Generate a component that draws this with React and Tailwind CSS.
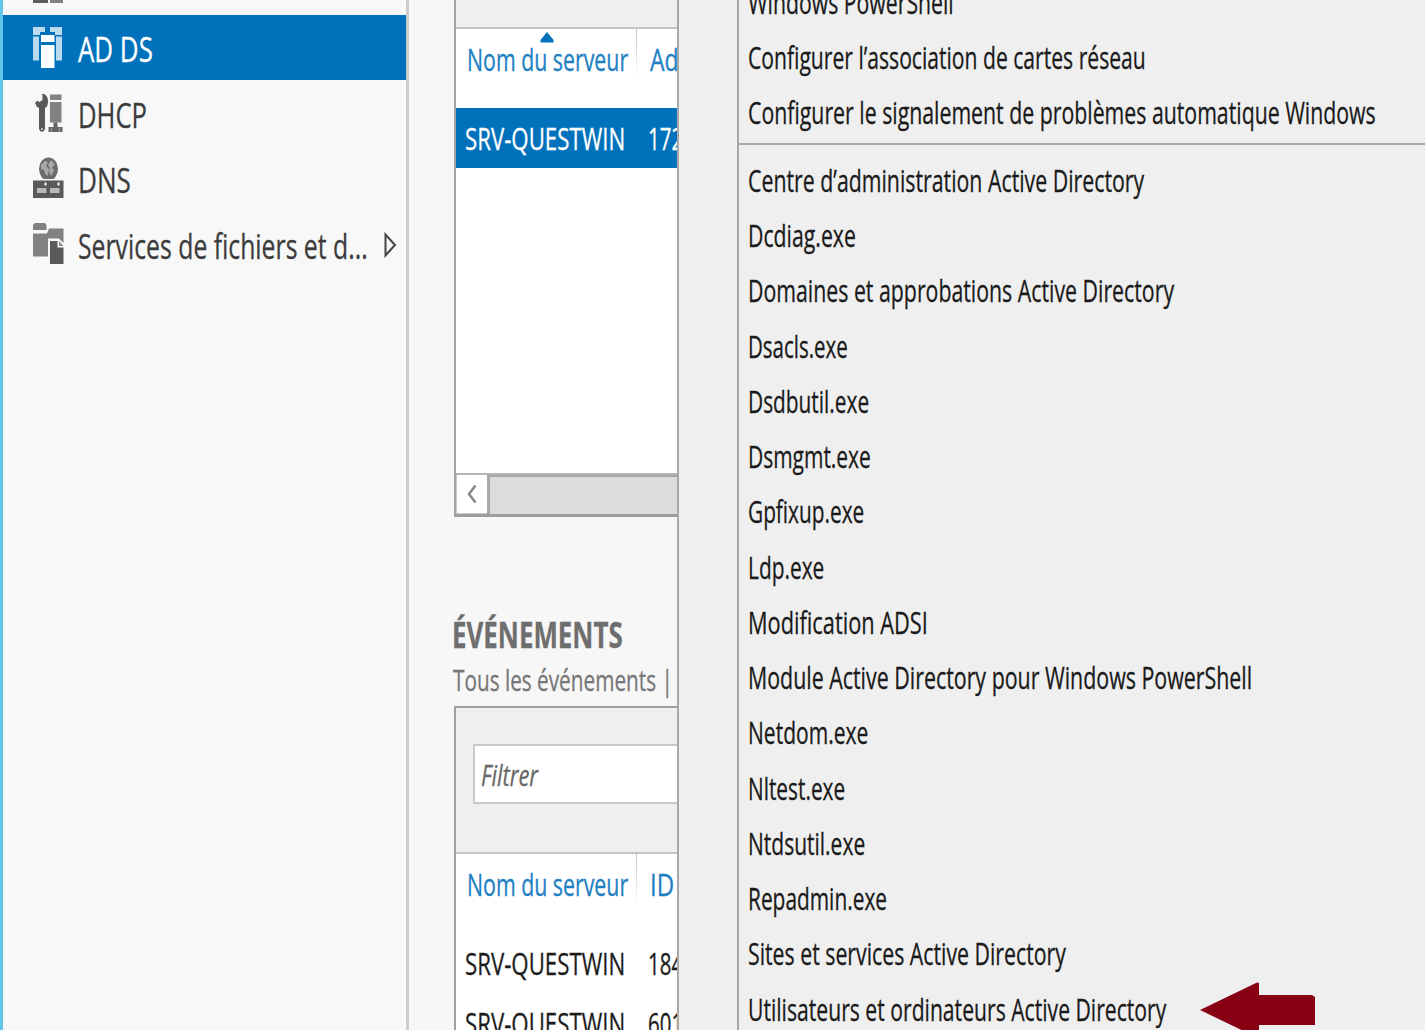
import { useLayoutEffect, useRef, useState } from "react";

// Condensed label: squeezes its text horizontally so that it spans `w` pixels.
function Label({ w, children, className = "" }) {
  const ref = useRef(null);
  const [scale, setScale] = useState(0.8);
  useLayoutEffect(() => {
    if (ref.current) setScale(w / ref.current.offsetWidth);
  }, [w, children]);
  return (
    <span className="block shrink-0" style={{ width: w }}>
      <span
        ref={ref}
        className={`inline-block origin-left whitespace-nowrap align-top [-webkit-text-stroke:0.3px_currentColor] ${className}`}
        style={{ transform: `scaleX(${scale})` }}
      >
        {children}
      </span>
    </span>
  );
}

function DomainIcon() {
  return (
    <svg className="mt-px" width="30" height="42" viewBox="0 0 30 42">
      <g fill="#bcdaee">
        <path d="M0 0h12v5H7v3H0z" />
        <path d="M17 0h12v8h-7V5h-5z" />
        <path d="M0 9.500h6V33.500H0zM23 9.500h6V33.500h-6z" />
      </g>
      <path d="M8 8h13.500v7H8zM8 18h13.500v23H8z" fill="#fff" />
    </svg>
  );
}

function DhcpIcon() {
  return (
    <svg className="mt-[2px]" width="30" height="40" viewBox="0 0 30 40">
      <path
        d="M7.500 0l2 .5V6L6.500 8 3.500 6.500v1L2 9l2 4 2 1v20c0 5 6 5 6 0V14c2-1 3-3 3-7 0-4-2-6-4-7z"
        fill="#595959"
      />
      <circle cx="9" cy="35" r="1" fill="#ddd" />
      <path d="M17 .5h11.500v5.500H17zM17 8h11.500v20.500H17z" fill="#828282" />
      <path d="M20.500 28.500h4V33h5v5H15.500v-5h5z" fill="#666" />
      <path d="M18.500 34v4M26.500 34v4" stroke="#a0a0a0" />
    </svg>
  );
}

function DnsIcon() {
  return (
    <svg width="31" height="42" viewBox="0 0 31 42">
      <ellipse cx="15.500" cy="12" rx="9.500" ry="11.500" fill="#6c6c6c" />
      <path d="M8 8l4-4 3 1-2 4 3 3-1 7-3-2-1-4-3-1zM18 3l4 5-3 2 2 4-3 5-2-5 1-3-2-3z" fill="#a8a8a8" />
      <path d="M0 22h30.500v2H0z" fill="#f8f8f8" />
      <path d="M0 23.500h30.500v17.500H0z" fill="#595959" />
      <path d="M4 31h9.500v5H4zM17 31h9.500v5H17z" fill="#b9b9b9" />
      <path d="M11.500 25.500h2v3h-2zM24.500 25.500h2v3h-2z" fill="#fff" />
    </svg>
  );
}

function FilesIcon() {
  return (
    <svg width="31" height="42" viewBox="0 0 31 42">
      <path d="M2 0h10l1.500 2v5H0V2zM0 10.500h14l2-5h14.500V20L26 15.500H15V33.500H0z" fill="#828282" />
      <path d="M17 18h7.500v6.500h6V41H17z" fill="#595959" />
      <path d="M26 18l4.500 5H26z" fill="#888" />
    </svg>
  );
}

const NAV = [
  { label: "AD DS", w: 75, Icon: DomainIcon, active: true },
  { label: "DHCP", w: 69, Icon: DhcpIcon },
  { label: "DNS", w: 53, Icon: DnsIcon },
  { label: "Services de fichiers et d...", w: 290, Icon: FilesIcon, more: true },
];

function Sidebar() {
  return (
    <aside className="flex h-full w-[409px] shrink-0 border-r-[3px] border-[#cdcdcd] bg-[#f8f8f8]">
      <div className="w-[3px] shrink-0 bg-[#62c6e9]" />
      <nav className="flex min-w-0 flex-1 flex-col">
        <div className="flex h-[14.500px] shrink-0 items-start gap-[2px] pl-[30px]">
          <span className="h-[2.500px] w-[15px] bg-[#5c5c5c]" />
          <span className="h-[2.500px] w-[13px] bg-[#828282]" />
        </div>
        {NAV.map(({ label, w, Icon, active, more }) => (
          <div
            key={label}
            className={`flex h-[65.500px] shrink-0 items-center pl-[30px] text-[34.500px] leading-[65px] ${
              active ? "bg-[#0072bc] text-white" : "text-[#3c3c3c]"
            }`}
          >
            <span className="flex w-[45px] shrink-0">
              <Icon />
            </span>
            <span className="pt-[3px]">
              <Label w={w}>{label}</Label>
            </span>
            {more && (
              <svg className="ml-[16px] mt-[2px] shrink-0" width="13" height="26" viewBox="0 0 13 26">
                <path d="M1.500 2.500v21L11 13z" fill="none" stroke="#444" strokeWidth="2" />
              </svg>
            )}
          </div>
        ))}
      </nav>
    </aside>
  );
}

function HeaderRow({ second, w2, sorted }) {
  return (
    <div className="flex h-[78.500px] shrink-0 bg-white text-[31px] leading-[60px] text-[#1e80c3]">
      <div className="relative flex w-[179.500px] shrink-0 pl-[11px]">
        {sorted && (
          <svg className="absolute left-[84px] top-[3px]" width="14" height="11" viewBox="0 0 14 11">
            <path d="M7 0l6.500 8v2.500H.5V8z" fill="#0072bc" />
          </svg>
        )}
        <Label w={161}>Nom du serveur</Label>
      </div>
      <div className="h-[50px] w-[1.500px] shrink-0 bg-linear-to-b from-[#c4c4c4] to-white" />
      <div className="pl-[13px]">
        <Label w={w2}>{second}</Label>
      </div>
    </div>
  );
}

function ServerRow({ value, active }) {
  return (
    <div
      className={`flex h-[60px] shrink-0 text-[31px] leading-[60px] ${
        active ? "bg-[#0072bc] text-white" : "text-[#1c1c1c]"
      }`}
    >
      <div className="w-[192px] shrink-0 pl-[9px]">
        <Label w={160}>SRV-QUESTWIN</Label>
      </div>
      <Label w={35}>{value}</Label>
    </div>
  );
}

function Content() {
  return (
    <main className="flex h-full w-[268px] shrink-0 flex-col overflow-hidden bg-[#f7f7f7] pl-[45px]">
      <section className="flex h-[517px] shrink-0 flex-col border-b-[3px] border-l-2 border-b-[#9d9d9d] border-l-[#a4a4a4] bg-white">
        <div className="h-[29px] shrink-0 border-b-2 border-[#c4c4c4] bg-[#efefef]" />
        <HeaderRow second="Ad" w2={29} sorted />
        <ServerRow value="172" active />
        <div className="flex-1" />
        <div className="flex h-[41px] shrink-0 border-t-2 border-[#b4b4b4]">
          <div className="flex w-[31px] shrink-0 items-center justify-center border-b border-l border-[#c8c8c8] bg-white">
            <svg width="10" height="20" viewBox="0 0 10 20">
              <path d="M8.500 1.500L2 10l6.500 8.500" fill="none" stroke="#858585" strokeWidth="2.500" />
            </svg>
          </div>
          <div className="flex-1 border-l-[3px] border-t-2 border-[#a8a8a8] bg-[#dcdcdc]" />
        </div>
      </section>

      <div className="h-[188.500px] shrink-0 pt-[94px] text-[#6e6e6e]">
        <div className="-ml-[2px] text-[35px] font-bold leading-[48px]">
          <Label w={171}>ÉVÉNEMENTS</Label>
        </div>
        <div className="-ml-px text-[30px] leading-[41px] text-[#767676]">
          <Label w={220}>Tous les événements |</Label>
        </div>
      </div>

      <section className="flex min-h-0 flex-1 flex-col border-l-2 border-t-2 border-[#a0a0a0] bg-white">
        <div className="flex h-[146.500px] shrink-0 flex-col border-b-2 border-[#c4c4c4] bg-[#efefef] pl-[16.500px] pt-[36px]">
          <div className="h-[60px] border-2 border-r-0 border-[#cacaca] bg-white pl-[6px] text-[30px] italic leading-[58px] text-[#686868]">
            <Label w={57}>Filtrer</Label>
          </div>
        </div>
        <HeaderRow second="ID" w2={24} />
        <ServerRow value="184" />
        <ServerRow value="601" />
      </section>
    </main>
  );
}

const GENERAL_TOOLS = [
  ["Windows PowerShell", 206],
  ["Configurer l’association de cartes réseau", 398],
  ["Configurer le signalement de problèmes automatique Windows", 628],
];

const AD_TOOLS = [
  ["Centre d’administration Active Directory", 396],
  ["Dcdiag.exe", 108],
  ["Domaines et approbations Active Directory", 426],
  ["Dsacls.exe", 100],
  ["Dsdbutil.exe", 121],
  ["Dsmgmt.exe", 123],
  ["Gpfixup.exe", 116],
  ["Ldp.exe", 76],
  ["Modification ADSI", 180],
  ["Module Active Directory pour Windows PowerShell", 504],
  ["Netdom.exe", 120],
  ["Nltest.exe", 97],
  ["Ntdsutil.exe", 117],
  ["Repadmin.exe", 139],
  ["Sites et services Active Directory", 318],
  ["Utilisateurs et ordinateurs Active Directory", 418],
];

function MenuItem({ label, w, children }) {
  return (
    <li className="flex h-[55.250px] shrink-0 items-center pl-[8.500px] leading-[55px]">
      <Label w={w}>{label}</Label>
      {children}
    </li>
  );
}

function ToolsMenu() {
  return (
    <div className="flex h-full min-w-0 flex-1 border-l-2 border-[#a8a8a8] bg-[#efefef]">
      <div className="w-[58px] shrink-0" />
      <div className="min-w-0 flex-1 border-l-2 border-[#a8a8a8] text-[30.500px] text-[#1a1a1a]">
        <ul className="-mt-[25.500px] flex flex-col">
          {GENERAL_TOOLS.map(([label, w]) => (
            <MenuItem key={label} label={label} w={w} />
          ))}
        </ul>
        <div className="mb-[7.500px] mt-[3px] h-[2px] bg-[#a8a8a8]" />
        <ul className="flex flex-col">
          {AD_TOOLS.map(([label, w], i) => (
            <MenuItem key={label} label={label} w={w}>
              {i === AD_TOOLS.length - 1 && (
                <svg className="ml-[34px] mt-[2px] shrink-0" width="115" height="56" viewBox="0 0 115 56">
                  <path d="M0 28L57 .5l2 .5v12h53l3 2v28H59v12l-2 .5z" fill="#870014" />
                </svg>
              )}
            </MenuItem>
          ))}
        </ul>
      </div>
    </div>
  );
}

export default function App() {
  return (
    <div className="flex h-[1030px] w-[1425px] overflow-hidden bg-[#f7f7f7] font-['Open_Sans','Noto_Sans',sans-serif]">
      <Sidebar />
      <Content />
      <ToolsMenu />
    </div>
  );
}
